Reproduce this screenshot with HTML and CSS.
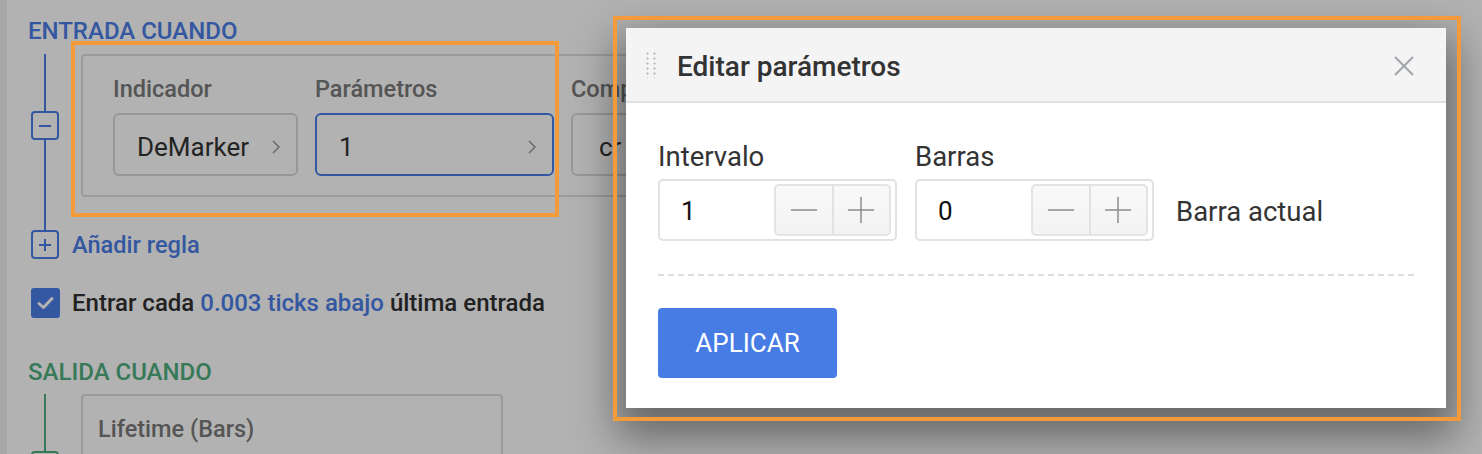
FILE: index.html
```html
<!DOCTYPE html>
<html lang="es">
<head>
<meta charset="utf-8">
<title>Editar parámetros</title>
<link rel="stylesheet" href="styles.css">
</head>
<body>
<div class="page">
  <main class="panel">
    <section class="block">
      <h2 class="block-title title-entry">ENTRADA CUANDO</h2>
      <div class="rule">
        <div class="rail rail-blue">
          <span class="node node-blue">
            <svg width="14" height="14" viewBox="0 0 14 14"><line x1="1" y1="7" x2="13" y2="7" stroke="currentColor" stroke-width="2"/></svg>
          </span>
        </div>
        <div class="card card-entry">
          <div class="field">
            <div class="flabel">Indicador</div>
            <div class="fbox fbox-ind"><span>DeMarker</span><svg class="chev" width="10" height="16" viewBox="0 0 10 16"><polyline points="2,2 8,8 2,14" fill="none" stroke="#9a9a9a" stroke-width="1.5"/></svg></div>
          </div>
          <div class="field">
            <div class="flabel">Parámetros</div>
            <div class="fbox fbox-par"><span>1</span><svg class="chev" width="10" height="16" viewBox="0 0 10 16"><polyline points="2,2 8,8 2,14" fill="none" stroke="#9a9a9a" stroke-width="1.5"/></svg></div>
          </div>
          <div class="field">
            <div class="flabel">Comp</div>
            <div class="fbox fbox-cmp"><span>cr</span></div>
          </div>
        </div>
      </div>
      <div class="connector rail-blue"></div>
      <div class="add-row">
        <div class="rail-slot">
          <span class="node node-blue">
            <svg width="14" height="14" viewBox="0 0 14 14"><line x1="1" y1="7" x2="13" y2="7" stroke="currentColor" stroke-width="2"/><line x1="7" y1="1" x2="7" y2="13" stroke="currentColor" stroke-width="2"/></svg>
          </span>
        </div>
        <span class="add-text">Añadir regla</span>
      </div>
      <div class="check-row">
        <span class="checkbox">
          <svg width="17" height="14" viewBox="0 0 17 14"><polyline points="2,7.5 6.5,11.5 15,2.5" fill="none" stroke="#fff" stroke-width="3" stroke-linecap="round" stroke-linejoin="round"/></svg>
        </span>
        <span class="check-text">Entrar cada <span class="hl">0.003 ticks abajo</span> última entrada</span>
      </div>
    </section>

    <section class="block block-exit">
      <h2 class="block-title title-exit">SALIDA CUANDO</h2>
      <div class="rule">
        <div class="rail rail-green">
          <span class="node node-green">
            <svg width="14" height="14" viewBox="0 0 14 14"><line x1="1" y1="7" x2="13" y2="7" stroke="currentColor" stroke-width="2"/></svg>
          </span>
        </div>
        <div class="card card-exit">
          <div class="flabel">Lifetime (Bars)</div>
        </div>
      </div>
    </section>
  </main>
</div>

<div class="overlay"></div>
<div class="annot annot-rule"></div>

<div class="modal" role="dialog" aria-label="Editar parámetros">
  <header class="modal-head">
    <span class="drag"></span>
    <h1 class="modal-title">Editar parámetros</h1>
    <svg class="close" width="22" height="22" viewBox="0 0 22 22"><line x1="2" y1="2" x2="20" y2="20" stroke="#a2a7ad" stroke-width="2.2"/><line x1="20" y1="2" x2="2" y2="20" stroke="#a2a7ad" stroke-width="2.2"/></svg>
  </header>
  <div class="modal-body">
    <div class="params">
      <div class="param">
        <div class="plabel">Intervalo</div>
        <div class="num">
          <span class="num-val">1</span>
          <div class="stepper">
            <span class="step"><svg width="26" height="26" viewBox="0 0 26 26"><line x1="0" y1="13" x2="26" y2="13" stroke="#8c8c8c" stroke-width="1.5"/></svg></span>
            <span class="step step-plus"><svg width="26" height="26" viewBox="0 0 26 26"><line x1="0" y1="13" x2="26" y2="13" stroke="#8c8c8c" stroke-width="1.5"/><line x1="13" y1="0" x2="13" y2="26" stroke="#8c8c8c" stroke-width="1.5"/></svg></span>
          </div>
        </div>
      </div>
      <div class="param">
        <div class="plabel">Barras</div>
        <div class="num">
          <span class="num-val">0</span>
          <div class="stepper">
            <span class="step"><svg width="26" height="26" viewBox="0 0 26 26"><line x1="0" y1="13" x2="26" y2="13" stroke="#8c8c8c" stroke-width="1.5"/></svg></span>
            <span class="step step-plus"><svg width="26" height="26" viewBox="0 0 26 26"><line x1="0" y1="13" x2="26" y2="13" stroke="#8c8c8c" stroke-width="1.5"/><line x1="13" y1="0" x2="13" y2="26" stroke="#8c8c8c" stroke-width="1.5"/></svg></span>
          </div>
        </div>
      </div>
      <div class="suffix">Barra actual</div>
    </div>
    <div class="divider"></div>
    <button class="apply" type="button">APLICAR</button>
  </div>
</div>
<div class="annot annot-modal"></div>
</body>
</html>
```

FILE: styles.css
```css
* { box-sizing: border-box; }

html, body {
  margin: 0;
  padding: 0;
}

body {
  width: 1482px;
  height: 454px;
  overflow: hidden;
  background: #f1f1f1;
  font-family: "Roboto", "Liberation Sans", sans-serif;
  position: relative;
}

.page {
  height: 454px;
  overflow: hidden;
}

.panel {
  margin-left: 7px;
  height: 454px;
  background: #fff;
  padding: 19px 0 0 21px;
}

.block-title {
  margin: 0;
  font-size: 24px;
  line-height: 25px;
  font-weight: 500;
}
.title-entry { color: #4a7de6; }
.title-exit { color: #4fae80; margin-top: 42px; }

.rule {
  display: flex;
  margin-top: 10px;
}
.block-exit .rule { margin-top: 9px; }

.rail {
  width: 34px;
  flex: none;
  display: flex;
  align-items: center;
  justify-content: center;
}
.rail-blue {
  background: linear-gradient(#4a7de6, #4a7de6) center / 2px 100% no-repeat;
}
.rail-green {
  background: linear-gradient(#4fae80, #4fae80) center / 2px 100% no-repeat;
}

.node {
  width: 28px;
  height: 29px;
  border: 2px solid;
  border-radius: 4px;
  background: #fff;
  display: flex;
  align-items: center;
  justify-content: center;
}
.node-blue { color: #4a7de6; border-color: #4a7de6; }
.node-green { color: #4fae80; border-color: #4fae80; }

.card {
  margin-left: 19px;
  border: 2px solid #dfdfdf;
  border-radius: 4px;
  padding: 19px 30px 19px 30px;
}
.card-entry {
  display: flex;
  gap: 17px;
  width: 760px;
  flex: none;
}
.card-exit {
  width: 422px;
  height: 143px;
  padding-left: 15px;
}

.flabel {
  font-size: 23.5px;
  line-height: 28px;
  font-weight: 500;
  color: #7a7a7a;
  white-space: nowrap;
}

.fbox {
  margin-top: 10px;
  height: 63px;
  border: 2px solid #d9d9d9;
  border-radius: 6px;
  padding: 5px 15px 0 22px;
  display: flex;
  align-items: center;
  justify-content: space-between;
  font-size: 26px;
  color: #333;
  white-space: nowrap;
  overflow: hidden;
}
.fbox-ind { width: 185px; }
.fbox-par { width: 239px; border-color: #4a7de6; }
.fbox-cmp { width: 260px; padding-left: 26px; }

.chev { flex: none; }

.connector {
  width: 34px;
  height: 33px;
}

.add-row {
  display: flex;
  align-items: center;
}
.rail-slot {
  width: 34px;
  display: flex;
  justify-content: center;
}
.add-text {
  margin-left: 10px;
  font-size: 23.6px;
  font-weight: 500;
  color: #4a7de6;
}

.check-row {
  margin-top: 29px;
  margin-left: 3px;
  display: flex;
  align-items: center;
}
.checkbox {
  width: 29px;
  height: 30px;
  border-radius: 3px;
  background: #4a7de6;
  display: flex;
  align-items: center;
  justify-content: center;
}
.check-text {
  margin-left: 12px;
  font-size: 24px;
  font-weight: 500;
  color: #303030;
}
.hl { color: #4a7de6; }

/* overlay + annotations */
.overlay {
  position: absolute;
  inset: 0;
  background: rgba(0, 0, 0, 0.3);
}

.annot {
  position: absolute;
  border: 4px solid #f39a3a;
}
.annot-rule {
  left: 71px;
  top: 41px;
  width: 488px;
  height: 176px;
}
.annot-modal {
  left: 613px;
  top: 16px;
  width: 848px;
  height: 405px;
}

/* modal */
.modal {
  position: absolute;
  left: 626px;
  top: 28px;
  width: 820px;
  height: 380px;
  background: #fff;
  box-shadow: 0 20px 40px 10px rgba(0, 0, 0, 0.42);
}

.modal-head {
  height: 75px;
  background: #f4f4f4;
  border-bottom: 2px solid #e0e0e0;
  display: flex;
  align-items: center;
  padding: 3px 31px 0 20px;
}

.drag {
  width: 10px;
  height: 27px;
  flex: none;
  background-image: radial-gradient(circle, #c6c6c6 1.1px, transparent 1.4px);
  background-size: 7px 5px;
  background-position: -2px 0;
  margin-top: -3px;
}

.modal-title {
  margin: 0 0 0 21px;
  font-size: 28px;
  font-weight: 500;
  color: #333;
  flex: 1;
}

.close { flex: none; }

.modal-body {
  padding: 38px 32px 30px;
}

.params {
  display: flex;
  align-items: flex-end;
  gap: 18px;
}

.plabel {
  font-size: 27.5px;
  line-height: 32px;
  color: #333;
}

.num {
  margin-top: 6px;
  width: 239px;
  height: 62px;
  border: 2px solid #e2e2e2;
  border-radius: 5px;
  display: flex;
  align-items: center;
  padding: 2px 4px 0 21px;
}

.num-val {
  flex: 1;
  font-size: 26px;
  color: #111;
}

.stepper {
  width: 117px;
  height: 52px;
  margin-top: -2px;
  border: 2px solid #e4e4e4;
  border-radius: 5px;
  background: linear-gradient(#f9f9f9, #f3f3f3);
  display: flex;
}

.step {
  flex: 1;
  display: flex;
  align-items: center;
  justify-content: center;
}
.step-plus { border-left: 2px solid #e2e2e2; }

.suffix {
  height: 62px;
  display: flex;
  align-items: center;
  padding-top: 3px;
  margin-left: 4px;
  font-size: 27.5px;
  color: #333;
}

.divider {
  margin-top: 33px;
  border-top: 2px dashed #dedede;
}

.apply {
  display: block;
  margin-top: 32px;
  width: 179px;
  height: 70px;
  border: 0;
  border-radius: 4px;
  background: #467ce3;
  color: #fff;
  font-family: "Roboto", "Liberation Sans", sans-serif;
  font-size: 26px;
  padding: 0;
}
```
